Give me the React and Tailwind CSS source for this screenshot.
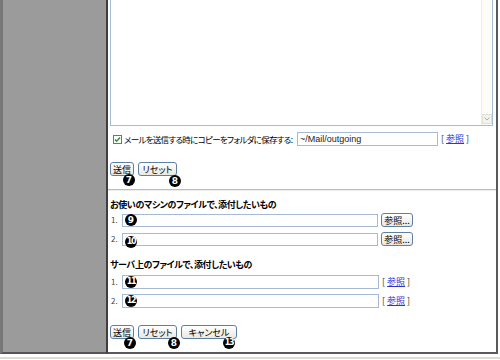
function Mark({ n, className }) {
  const two = n.length > 1;
  return (
    <span
      className={`absolute flex h-[12px] w-[12px] items-center justify-center rounded-full bg-black font-bold leading-none text-white ${two ? "text-[8px] tracking-[-1.2px]" : "text-[9px]"} ${className}`}
      style={{ fontFamily: '"DejaVu Sans", sans-serif' }}
    >
      {n}
    </span>
  );
}

function Btn({ w, children }) {
  return (
    <button
      type="button"
      className={`flex h-[14px] ${w} items-center justify-center rounded-[3px] border border-[#5f7ea3] bg-gradient-to-b from-white to-[#e9e8e2] text-[9px] leading-none text-black`}
    >
      {children}
    </button>
  );
}

function RefLink() {
  return (
    <span className="ml-[3px] text-[9px] text-[#333]">
      [ <a href="#" className="text-[#3232d6] underline">参照</a> ]
    </span>
  );
}

function Input({ w, h = "h-[14px]", children }) {
  return (
    <div className={`flex ${w} ${h} shrink-0 items-center border border-[#a7bad3] bg-white px-[2px]`}>
      {children}
    </div>
  );
}

export default function App() {
  return (
    <div
      className="h-[360px] w-[500px] overflow-hidden bg-white text-[9px] text-black [font-feature-settings:'palt']"
      style={{ fontFamily: '"Noto Sans CJK JP", "Liberation Sans", sans-serif' }}
    >
      <div className="flex h-[354px]">
        {/* left gray column */}
        <div className="w-[108px] shrink-0 border-b-2 border-l-[3px] border-r-2 border-b-[#555] border-l-[#777] border-r-[#3f3f3f] bg-[#9b9b9b]" />

        {/* main form */}
        <div className="flex w-[390px] shrink-0 flex-col border-b-2 border-r-2 border-[#5a5a5a]">
          {/* textarea (top cut off) */}
          <div className="ml-[2px] flex h-[126px] w-[383px] border border-t-0 border-[#a8bbd4]">
            <div className="flex-1" />
            <div className="flex w-[11px] flex-col justify-end border-l border-[#f1ece2] bg-[#fdfcf9] pb-[1px]">
              <div className="flex h-[10px] w-[10px] items-center justify-center border border-[#e3dfd5] bg-[#f4f2ec]">
                <svg width="6" height="4" viewBox="0 0 6 4">
                  <path d="M0.5 0.5 L3 3 L5.5 0.5" fill="none" stroke="#b4b0a4" strokeWidth="1" />
                </svg>
              </div>
            </div>
          </div>

          {/* save copy row */}
          <div className="mt-[6px] flex h-[14px] items-center">
            <svg className="ml-[5px] shrink-0" width="9" height="9" viewBox="0 0 9 9">
              <rect x="0.5" y="0.5" width="8" height="8" fill="#fff" stroke="#4f7aa8" />
              <path d="M2 4.5 L3.6 6.2 L7 2.6" fill="none" stroke="#1f9e1f" strokeWidth="1.5" />
            </svg>
            <span className="ml-[2px] w-[173px] shrink-0 whitespace-nowrap text-[8.5px] leading-none tracking-[-0.7px]">
              メールを送信する時にコピーをフォルダに保存する:
            </span>
            <Input w="w-[141px]">
              <span
                className="text-[9px] leading-none text-[#222]"
                style={{ fontFamily: '"Liberation Sans", sans-serif' }}
              >
                ~/Mail/outgoing
              </span>
            </Input>
            <RefLink />
          </div>

          {/* buttons 1 */}
          <div className="relative ml-[2px] mt-[16px] flex gap-[4px]">
            <Btn w="w-[24px]">送信</Btn>
            <Btn w="w-[39px]">リセット</Btn>
            <Mark n="7" className="left-[13px] top-[12px]" />
            <Mark n="8" className="left-[59px] top-[13px]" />
          </div>

          <div className="mt-[13px] h-[2px] border-t border-[#bdbdbd] bg-[#ebebeb]" />

          {/* local files */}
          <div className="ml-[2px] mt-[8px] font-bold leading-[12px] tracking-[-0.4px]">
            お使いのマシンのファイルで、添付したいもの
          </div>
          <div className="relative mt-[2px] flex items-center">
            <span className="w-[14px] pl-[3px] text-[8px] text-[#444]">1.</span>
            <Input w="w-[256px]" h="h-[13px]" />
            <div className="ml-[3px]">
              <Btn w="w-[32px]">参照...</Btn>
            </div>
            <Mark n="9" className="left-[17px] top-[1px]" />
          </div>
          <div className="relative mt-[5px] flex items-center">
            <span className="w-[14px] pl-[3px] text-[8px] text-[#444]">2.</span>
            <Input w="w-[256px]" h="h-[13px]" />
            <div className="ml-[3px]">
              <Btn w="w-[32px]">参照...</Btn>
            </div>
            <Mark n="10" className="left-[17px] top-[4px]" />
          </div>

          {/* server files */}
          <div className="ml-[2px] mt-[13px] font-bold leading-[12px] tracking-[-0.4px]">
            サーバ上のファイルで、添付したいもの
          </div>
          <div className="relative mt-[4px] flex items-center">
            <span className="w-[14px] pl-[3px] text-[8px] text-[#444]">1.</span>
            <Input w="w-[257px]" />
            <RefLink />
            <Mark n="11" className="left-[17px] top-[1px]" />
          </div>
          <div className="relative mt-[5px] flex items-center">
            <span className="w-[14px] pl-[3px] text-[8px] text-[#444]">2.</span>
            <Input w="w-[257px]" />
            <RefLink />
            <Mark n="12" className="left-[17px] top-[1px]" />
          </div>

          {/* buttons 2 */}
          <div className="relative ml-[2px] mt-[17px] flex gap-[4px]">
            <Btn w="w-[24px]">送信</Btn>
            <Btn w="w-[39px]">リセット</Btn>
            <Btn w="w-[56px]">キャンセル</Btn>
            <Mark n="7" className="left-[14px] top-[12px]" />
            <Mark n="8" className="left-[58px] top-[12px]" />
            <Mark n="13" className="left-[113px] top-[12px]" />
          </div>
        </div>
      </div>
      <div className="mt-[3px] h-[2px] bg-[#dfdbcf]" />
    </div>
  );
}
